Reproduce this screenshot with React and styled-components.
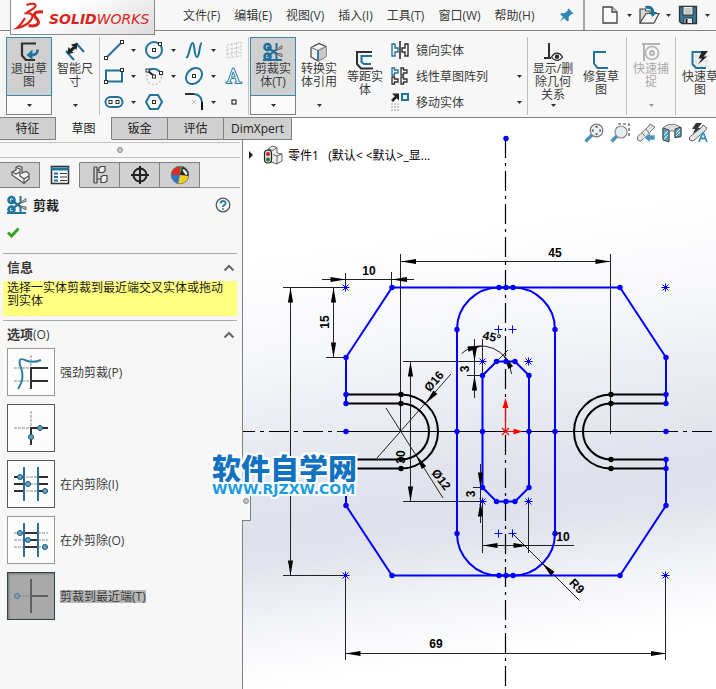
import { Fragment, useState } from "react";
import styled, { createGlobalStyle, css } from "styled-components";

const BLUE = "#1f7299";
const INK = "#2f2f2f";
const LINE = "#808080";

const GlobalStyle = createGlobalStyle`
  * {
    box-sizing: border-box;
  }
  body {
    margin: 0;
    overflow: hidden;
    background: #f7f7f7;
    color: #3a3a3a;
    font-family: "Open Sans", "Noto Sans CJK SC", sans-serif;
    font-size: 12px;
    line-height: 13px;
  }
  button {
    padding: 0;
    border: 0;
    background: none;
    color: inherit;
    font: inherit;
  }
  h1, h2, p, fieldset {
    margin: 0;
    padding: 0;
    border: 0;
  }
`;

const Page = styled.div`
  display: flex;
  flex-direction: column;
  min-height: 100vh;
`;

/* ---------- menu bar ---------- */

const MenuBar = styled.header`
  position: relative;
  display: flex;
  align-items: center;
  height: 31px;
  padding-left: 183px;
  border-bottom: 1px solid ${LINE};
`;

const Logo = styled.div`
  position: absolute;
  z-index: 2;
  top: 0;
  left: 10px;
  display: flex;
  align-items: center;
  width: 145px;
  height: 35px;
  padding-left: 4px;
  border: 1px solid #8c8c8c;
  border-top: 0;
  background: linear-gradient(150deg, #ffffff 35%, #dcdcdc);
  color: #d9251c;
  font-family: "DejaVu Sans", sans-serif;
  font-size: 14px;
  font-style: italic;
  white-space: nowrap;
`;

const LogoWord = styled.span`
  padding: 5px 0 0 4px;
`;

const Menus = styled.nav`
  display: flex;
  flex: none;
  gap: 14px;
  width: 374px;
  white-space: nowrap;
`;

const QuickTools = styled.div`
  display: flex;
  flex: none;
  align-items: center;
  align-self: stretch;
  margin-left: 6px;
  padding-left: 15px;
  border-left: 2px solid #a5a5a5;
`;

const IconButton = styled.button`
  display: flex;
  flex: none;
  align-items: center;
  justify-content: center;
  width: 20px;
  height: 20px;
`;

const DropButton = styled(IconButton)`
  width: 19px;
`;

const Svg = styled.svg`
  display: block;
  flex: none;
  overflow: visible;
`;

/* ---------- ribbon ---------- */

const RibbonBar = styled.div`
  display: flex;
  height: 87px;
  padding: 6px 0 2px 6px;
  border-bottom: 1px solid ${LINE};
  overflow: hidden;
`;

const Divider = styled.div`
  flex: none;
  width: 1px;
  margin: 0 1px;
  background: #c0c0c0;
`;

const ToolPair = styled.div`
  display: flex;
  flex: none;
  gap: 2px;
  padding: 0 1px;
`;

const Tool = styled.div`
  display: flex;
  flex: none;
  flex-direction: column;
  width: 46px;
  color: ${(p) => (p.$disabled ? "#a8a8a8" : "#3a3a3a")};
`;

const ToolFace = styled.button`
  display: flex;
  flex-direction: column;
  align-items: center;
  height: 59px;
  padding-top: ${(p) => (p.$low ? 12 : 4)}px;
  border: 1px solid transparent;
  white-space: nowrap;
  ${(p) =>
    p.$active &&
    css`
      border-color: #3f86ae;
      background: #d0d0d0;
    `}
`;

const ToolDrop = styled.button`
  display: flex;
  align-items: center;
  justify-content: center;
  height: 19px;
  border: 1px solid transparent;
  border-top: 0;
  ${(p) =>
    p.$active &&
    css`
      border-color: ${LINE};
      background: #fbfbfb;
    `}
`;

const SketchGrid = styled.div`
  display: grid;
  flex: none;
  grid-template-columns: repeat(3, 20px 20px) 20px;
  grid-auto-rows: 26px;
  align-items: center;
  padding: 0 3px;
`;

const EntityList = styled.div`
  display: grid;
  flex: none;
  grid-template-columns: 1fr 16px;
  grid-auto-rows: 26px;
  align-items: center;
  width: 138px;
  padding-left: 2px;
`;

const EntityButton = styled.button`
  display: flex;
  align-items: center;
  gap: 6px;
  white-space: nowrap;
`;

/* ---------- workspace ---------- */

const Workspace = styled.main`
  position: relative;
  display: flex;
  flex: 1;
`;

const Side = styled.aside`
  position: relative;
  z-index: 1;
  display: flex;
  flex: none;
  flex-direction: column;
  width: 243px;
`;

const RibbonTabs = styled.div`
  display: flex;
  width: max-content;
`;

const RibbonTab = styled.button`
  min-width: 56px;
  height: 22px;
  padding: 0 7px;
  border-right: 1px solid ${LINE};
  border-bottom: 1px solid ${LINE};
  background: #d0d0d0;
  color: #222;
  ${(p) =>
    p.$active &&
    css`
      height: 23px;
      margin-top: -1px;
      border-bottom-color: #f7f7f7;
      background: #f7f7f7;
    `}
`;

const Panel = styled.section`
  display: flex;
  flex: 1;
  flex-direction: column;
  padding: 2px 2px 0 0;
  border-right: 1px solid ${LINE};
  background: #f7f7f7;
`;

const Grip = styled.div`
  display: flex;
  align-items: center;
  justify-content: center;
  height: 16px;
  margin-bottom: 4px;
  border-top: 1px solid #c4c4c4;
  border-bottom: 1px solid #c4c4c4;
`;

const GripDot = styled.span`
  width: 6px;
  height: 6px;
  border: 1px solid #8d8d8d;
  border-radius: 50%;
  background: #c6c6c6;
`;

const PanelTabs = styled.div`
  display: flex;
  height: 26px;
  border-bottom: 1px solid #a8a8a8;
`;

const PanelTab = styled.button`
  display: flex;
  align-items: center;
  justify-content: center;
  width: 40px;
  height: 26px;
  border: 1px solid ${LINE};
  border-left: 0;
  background: ${(p) => (p.$active ? "#f7f7f7" : "#d0d0d0")};
  ${(p) =>
    p.$active &&
    css`
      border-top-color: #f7f7f7;
      border-bottom-color: #f7f7f7;
    `}
`;

const TitleRow = styled.div`
  display: flex;
  align-items: center;
  gap: 6px;
  height: 34px;
  padding: 0 7px;
`;

const PanelTitle = styled.h1`
  flex: 1;
  color: #222;
  font-size: 13px;
  line-height: 16px;
`;

const ConfirmRow = styled.div`
  height: 31px;
  padding: 0 3px;
`;

const Section = styled.section`
  margin: 0 3px;
  border-top: 1px solid #a8a8a8;
`;

const SectionHead = styled.h2`
  display: flex;
  align-items: center;
  justify-content: space-between;
  height: 27px;
  padding: 0 2px 0 4px;
  font-size: 13px;
  font-weight: bold;

  small {
    font-size: 12px;
    font-weight: normal;
  }
`;

const SectionLabel = styled.span`
  flex: 1;
`;

const Message = styled.p`
  height: 35px;
  margin-bottom: 4px;
  padding-left: 4px;
  background: #ffff80;
  color: #1c1c1c;
`;

const Options = styled.fieldset`
  display: flex;
  flex-direction: column;
  gap: 8px;
  padding-left: 4px;
`;

const Option = styled.label`
  display: grid;
  grid-template-columns: 48px max-content;
  gap: 5px;
  align-items: center;

  svg {
    grid-area: 1 / 1;
    justify-self: center;
    opacity: ${(p) => (p.$active ? 0.6 : 1)};
    pointer-events: none;
  }
`;

const OptionBox = styled.input`
  grid-area: 1 / 1;
  width: 48px;
  height: 48px;
  margin: 0;
  border: 1px solid ${(p) => (p.$strong ? "#5a5a5a" : "#999")};
  background: #fcfcfc;
  appearance: none;

  &:checked {
    border: 1px solid #34424c;
    background: #a9a9a9;
    box-shadow: inset 1px 1px 2px #777;
  }
`;

const OptionText = styled.span`
  background: ${(p) => (p.$active ? "#b9b9b9" : "transparent")};
`;

const Splitter = styled.div`
  position: absolute;
  top: 363px;
  left: 242px;
  display: flex;
  align-items: center;
  justify-content: center;
  width: 9px;
  height: 40px;
  border: 1px solid ${LINE};
  border-left: 0;
  background: #f7f7f7;
`;

const Canvas = styled.section`
  position: relative;
  flex: 1;
  min-width: 0;
  overflow: hidden;
  background: linear-gradient(
    172deg,
    #ffffff 22%,
    #f6f7fa 38%,
    #e8eaf1 52%,
    #dfe1eb 64%,
    #e1e3ec 70%,
    #f3f4f8 80%,
    #ffffff 90%
  );
`;

const TreeLabel = styled.div`
  position: absolute;
  top: 27px;
  left: 4px;
  display: flex;
  align-items: center;
  gap: 5px;
  height: 20px;
  color: #000;
  white-space: pre;
`;

const TreeArrow = styled(Svg)`
  margin-right: 5px;
`;

const ViewTools = styled.div`
  position: absolute;
  top: 5px;
  right: 8px;
  display: flex;
  gap: 6px;
`;

const Watermark = styled.div`
  position: absolute;
  z-index: 2;
  top: 333px;
  left: 212px;
  color: #1272c0;
  font-family: "Noto Sans CJK SC", sans-serif;
  font-size: 29px;
  font-weight: 900;
  line-height: 32px;
  white-space: nowrap;
  text-shadow:
    -2px 0 #fff,
    2px 0 #fff,
    0 -2px #fff,
    0 2px #fff,
    2px 2px #fff,
    -2px -2px #fff,
    2px -2px #fff,
    -2px 2px #fff;

  small {
    display: block;
    color: #1b9be0;
    font-family: "DejaVu Sans", sans-serif;
    font-size: 14px;
    font-weight: bold;
    line-height: 12px;
  }
`;

const DimText = styled.text`
  fill: #000;
  font-family: "Liberation Sans Narrow", "Liberation Sans", sans-serif;
  font-size: 12px;
  font-weight: bold;
  text-anchor: middle;
`;

/* ---------- icons ---------- */

const Icon = ({ children, size = 20, ...rest }) => (
  <Svg
    width={size}
    height={size}
    viewBox="0 0 20 20"
    fill="none"
    stroke={BLUE}
    strokeWidth="1.6"
    aria-hidden="true"
    {...rest}
  >
    {children}
  </Svg>
);

const Node = ({ x, y }) => (
  <rect x={x - 1.5} y={y - 1.5} width="3" height="3" fill="#fff" stroke={INK} strokeWidth="1" />
);

const Caret = ({ color = INK }) => (
  <Svg width="5" height="3" viewBox="0 0 5 3" aria-hidden="true">
    <path d="M0 0h5L2.5 3z" fill={color} />
  </Svg>
);

const Chevron = () => (
  <Svg width="12" height="8" viewBox="0 0 12 8" aria-hidden="true">
    <path d="M1.5 6.5 6 2l4.5 4.5" fill="none" stroke="#666" strokeWidth="2" />
  </Svg>
);

const LogoMark = () => (
  <Svg width="30" height="30" viewBox="0 0 30 30" fill="none" stroke="#d9251c" aria-hidden="true">
    <path d="M11.5 3C17 1 21 1.500 20.500 4c-.5 2-4 4-8.500 6.500" strokeWidth="2.200" />
    <path d="M9.500 11.500c8-1.500 9.500 2 6.500 6.500-3 4-8 7-14 8 2.500-2 5.500-5.500 8-10" strokeWidth="2.200" />
    <path d="M28 10c-6-.8-9 .6-8.500 3.500s4.500 4 4 7-4.500 4-10 3" strokeWidth="3" />
  </Svg>
);

const ExitSketch = () => (
  <Icon>
    <path d="M17 1.500H3v12L7 18h9" stroke={INK} strokeWidth="2.200" />
    <path d="M18.500 7.500c.5 4-2 5.500-6 5.500" strokeWidth="2.800" />
    <path d="M13.500 7.500v10.500L7.500 13z" fill={BLUE} stroke="none" />
  </Icon>
);

const SmartDim = () => (
  <Icon>
    <path d="M1 9l8 9M11 1l8 9" strokeWidth="2" />
    <path d="M4 10l7-6" stroke="#222" strokeWidth="3" />
    <path d="M2 12l1.500-7L8.500 11zM12.500 1 11.500 8 6 2.500z" fill="#222" stroke="none" />
  </Icon>
);

const Scissors = () => (
  <Icon>
    <circle cx="4.500" cy="5" r="3" strokeWidth="2.600" />
    <circle cx="4.500" cy="14.500" r="3" strokeWidth="2.600" />
    <path d="M4 5l10 7M4 15l10-8" strokeWidth="2.200" />
    <path d="M12 8.500l7-5v3zM12 11l7 4v-3z" fill="#bbb" stroke="#555" strokeWidth=".8" />
    <path d="M13.500 1v5.500M13.500 12v7M0 18h19" strokeWidth="2" />
  </Icon>
);

const Cube = () => (
  <Icon>
    <path d="M2 5.500 10 1.500l7 3v10l-8 4.500-7-4z" fill="#f2f2f2" stroke="#444" strokeWidth="1.200" />
    <path d="M9 8.500l8-4v10L9 19z" fill="#c8c8c8" stroke="none" />
    <path d="M2 5.500l7 3 8-4" stroke="#666" strokeWidth="1" />
    <path d="M9 8.500V18" strokeWidth="1.800" />
  </Icon>
);

const Offset = () => (
  <Icon>
    <path d="M17 2H2v12l4 4.500h12" stroke={INK} strokeWidth="2" />
    <path d="M17 6H6.500v6L9 14h7" strokeWidth="2" />
  </Icon>
);

const Mirror = () => (
  <Icon>
    <path d="M10 1v18" stroke={INK} />
    <path d="M2 4h3v4h3v4H5v4H2z" strokeWidth="1.400" />
    <path d="M18 4h-3v4h-3v4h3v4h3z" stroke={INK} strokeWidth="1.400" />
  </Icon>
);

const Pattern = () => (
  <Icon stroke={INK} strokeWidth="1.300">
    <path d="M2 2h2.500v2H8v3H4.500v2H2z" stroke={BLUE} />
    <path d="M11 2h2.500v2H17v3h-3.500v2H11zM2 11h2.500v2H8v3H4.500v2H2zM11 11h2.500v2H17v3h-3.500v2H11z" />
  </Icon>
);

const Move = () => (
  <Icon>
    <path d="M2 9l5-5" stroke="#222" strokeWidth="2.600" />
    <path d="M2 1.500h7v7z" fill="#222" stroke="none" />
    <rect x="12" y="2" width="6" height="6" strokeWidth="2" />
    <path d="M1 12h8M1 15h8M1 18h8" stroke="#ccc" strokeWidth="1.800" strokeDasharray="2 1" />
  </Icon>
);

const Relations = () => (
  <Icon>
    <path d="M6 1v15M1 16h7" stroke={INK} strokeWidth="2" />
    <path d="M8.500 15c3-5 8-5 11 0-3 4.500-8 4.500-11 0z" fill="#fff" stroke={INK} strokeWidth="1.300" />
    <circle cx="14" cy="14.800" r="2.300" fill={INK} stroke="none" />
  </Icon>
);

const Repair = () => (
  <Icon>
    <path d="M15 2H3v11.500L6.500 18H17" strokeWidth="2" />
  </Icon>
);

const Snap = () => (
  <Icon stroke="#b4b4b4">
    <path d="M1 2h18M3 2v17" strokeWidth="2" />
    <circle cx="11" cy="11" r="6.500" />
    <circle cx="11" cy="11" r="2" strokeWidth="2" />
  </Icon>
);

const RapidSketch = () => (
  <Icon>
    <path d="M6 2v16M11 2v16M16 2v16M2 6h17M2 11h17M2 16h17" stroke="#ddd" strokeWidth="1" />
    <path d="M14 2H2.500v12L6 18h10" strokeWidth="2" />
    <path d="M18 1h-6L8.500 8.500H12L7.500 15 17 6.500h-3.500z" fill="#222" stroke="none" />
  </Icon>
);

const Pin = () => (
  <Icon size={16}>
    <path
      d="M12 2l6 6-1.500 1-1-.3-3.500 3.800.3 4-1.800 1.500-4-4L1 18.500l4-6-3.500-3.500L3 7.500l4 .3L11 4.500 10.800 3z"
      fill="#2e86b3"
      stroke="none"
    />
  </Icon>
);

const NewDoc = () => (
  <Icon stroke="#444" strokeWidth="1.300">
    <path d="M3 2h9l5 5v11H3z" fill="#fbfbfb" />
    <path d="M12 2v5h5" fill="#ddd" />
  </Icon>
);

const OpenDoc = () => (
  <Icon stroke="#444" strokeWidth="1.200">
    <path d="M1 18V4h5l1 2h7v12z" fill="#d8d8d8" />
    <path d="M1 18l6-9.500h13L15 18z" fill="#f6f6f6" />
    <path d="M6.500 2.500c5-1 7 .5 7.500 5" stroke={BLUE} strokeWidth="3" />
    <path d="M10 7h8l-4.500 5z" fill={BLUE} stroke="none" />
  </Icon>
);

const Save = () => (
  <Icon stroke="#333" strokeWidth="1.300">
    <path d="M1.500 1.500h17v17H4l-2.500-2z" fill="#327a9c" />
    <path d="M5 1.500h10V10H5z" fill="#f3f3f3" strokeWidth="1" />
    <path d="M6.500 4h7M6.500 6h7M6.500 8h7" stroke="#888" strokeWidth=".8" />
    <path d="M6 13h8.500v5.500H6z" fill="#e8e8e8" strokeWidth="1" />
    <path d="M8.500 14v4" stroke="#222" strokeWidth="2" />
  </Icon>
);

const sketchIcons = {
  直线: (
    <Icon>
      <path d="M3 17L17 3" strokeWidth="2" />
      <Node x={2} y={18} />
      <Node x={18} y={2} />
    </Icon>
  ),
  圆: (
    <Icon>
      <circle cx="10" cy="10" r="8" strokeWidth="2" />
      <Node x={10} y={10} />
      <Node x={16} y={4} />
    </Icon>
  ),
  样条曲线: (
    <Icon>
      <path d="M2 17C5 19 6 3 8.500 3S10 17 13 17s2-14 5-14" strokeWidth="2" />
    </Icon>
  ),
  基准面: (
    <Icon stroke="#c2c2c2" strokeWidth="1" strokeDasharray="2 1.500">
      <path d="M3 5l14-3v14L3 18zM3 9.500l14-2M3 14l14-2M8 4v13M12.500 3v14" />
    </Icon>
  ),
  矩形: (
    <Icon>
      <rect x="2" y="4.500" width="16" height="11" strokeWidth="2" />
      <Node x={2} y={16} />
      <Node x={18} y={4} />
    </Icon>
  ),
  圆弧: (
    <Icon>
      <circle cx="10" cy="11" r="7.500" stroke="#c4c4c4" strokeDasharray="2 2" />
      <path d="M4 5c3-3 9-3 12 1" strokeWidth="2" />
      <path d="M4 5l6 5" stroke="#222" strokeWidth="2" />
      <Node x={3.5} y={4.5} />
      <Node x={10} y={10.5} />
      <Node x={17} y={7} />
    </Icon>
  ),
  椭圆: (
    <Icon>
      <ellipse cx="10" cy="10" rx="9" ry="7" strokeWidth="2" transform="rotate(-45 10 10)" />
      <Node x={10} y={10} />
    </Icon>
  ),
  文字: (
    <Icon stroke="#2f7fa6" strokeWidth="1">
      <path
        d="M10 2 15.500 16H18v1.500h-7V16h1.500l-1.200-3.500h-4L6 16h2v1.500H2V16h1.500L8.500 2zM9.200 6l-1.700 5h3.500z"
        fill="#dcecf4"
      />
    </Icon>
  ),
  槽口: (
    <Icon>
      <rect x="1.500" y="5" width="17" height="10" rx="5" strokeWidth="2" />
      <Node x={6.5} y={10} />
      <Node x={13.5} y={10} />
    </Icon>
  ),
  多边形: (
    <Icon>
      <path d="M6 3h8l4 7-4 7H6l-4-7z" strokeWidth="2" />
      <Node x={10} y={10} />
    </Icon>
  ),
  圆角: (
    <Icon>
      <path d="M1 2h9" stroke={INK} strokeWidth="2" />
      <path d="M10 2c5 .5 7.500 3 8 8" strokeWidth="2" />
      <path d="M18 10v8" stroke="#111" strokeWidth="2" />
      <path d="M8 8l4 4M12 8l-4 4" stroke="#bbb" strokeWidth="1" />
    </Icon>
  ),
  点: (
    <Icon>
      <rect x="8" y="8" width="4" height="4" fill="#fff" stroke={INK} strokeWidth="1.200" />
    </Icon>
  ),
};

const panelIcons = {
  特征树: (
    <Icon stroke="#555" strokeWidth="1.300">
      <path d="M2 7l4-2V2.500L9 1l3 1.500V8l4-1.500 3 2V14l-5 4.500L2 10z" fill="#f2f2f2" />
      <path d="M2 7l4 2 4-2V4L6 2.500M10 7v4l4 3 5-3M14 14v4" />
    </Icon>
  ),
  属性: (
    <Icon stroke="#333">
      <rect x="1.500" y="1.500" width="17" height="17" fill="#fff" />
      <path d="M1 4h18" stroke={BLUE} strokeWidth="3" />
      <path d="M4 8.500h4M4 12h4M4 15.500h4" stroke={BLUE} strokeWidth="2" />
      <path d="M10 8.500h7M10 12h7M10 15.500h7" strokeWidth="1.200" />
    </Icon>
  ),
  配置: (
    <Icon stroke="#444" strokeWidth="1.200">
      <path d="M4 2v16M7 2v16M4 2h3M4 18h3M7 5h3M7 14h4" />
      <path d="M9 3l2-1.500h4V6l-2 1.500H9zM11 12l2-1.500h4V16l-2 1.500h-4z" fill="#eee" />
    </Icon>
  ),
  尺寸专家: (
    <Icon stroke="#222" strokeWidth="2">
      <circle cx="10" cy="10" r="6.500" />
      <path d="M10 1v18M1 10h18" />
    </Icon>
  ),
  外观: (
    <Icon stroke="none">
      <circle cx="10" cy="10" r="9" fill="#2b74c8" />
      <path d="M10 10H1a9 9 0 0 1 9-9z" fill="#d92c22" />
      <path d="M10 10V1a9 9 0 0 1 2.500.3z" fill="#3da546" />
      <path d="M10 10l2.500-8.700A9 9 0 0 1 18.900 11z" fill="#222" />
      <path d="M10 10l8.900 1A9 9 0 0 1 8 18.800z" fill="#f3cf22" />
      <ellipse cx="15" cy="7" rx="1.300" ry="3.500" fill="#eee" transform="rotate(-35 15 7)" />
      <circle cx="10" cy="10" r="8.800" fill="none" stroke="#777" strokeWidth=".8" />
    </Icon>
  ),
};

const viewIcons = {
  整屏显示全图: (
    <Icon stroke="#777">
      <path d="M1.500 18.500 8 12" stroke="#4b93b8" strokeWidth="3.400" />
      <circle cx="12.500" cy="7.500" r="6.300" fill="#eef2f4" strokeWidth="1.200" />
      <path
        d="M12.500 2.500l1.800 2h-3.600zM12.500 12.500l1.800-2h-3.600zM7.500 7.500l2-1.800v3.600zM17.500 7.500l-2-1.800v3.600z"
        fill="#444"
        stroke="none"
      />
    </Icon>
  ),
  局部放大: (
    <Icon stroke="#888">
      <path d="M8 1h11v12" stroke="#444" strokeWidth="1.200" strokeDasharray="3 2" />
      <path d="M1.500 18.500 7 13" stroke="#4b93b8" strokeWidth="3.400" />
      <circle cx="11" cy="9" r="6" fill="#e6edf1" strokeWidth="1.200" />
    </Icon>
  ),
  上一视图: (
    <Icon stroke="#777" strokeWidth="1">
      <path d="M1.500 13.500 12 4l2-3 5 3-3 3L5 18l-3.500-1z" fill="#e4e4e4" />
      <path d="M10 6l3 4M6 9.500l3 4" />
      <path d="M8 14.500l6-5V12h5v5h-5v2.500z" fill="#4b93b8" stroke="#fff" strokeWidth=".6" />
    </Icon>
  ),
  剖面视图: (
    <Icon stroke="#777" strokeWidth="1">
      <path d="M1 5c5-5 13-5 18 0v9h-6V9c-2-1.500-4-1.500-6 0v9l-6-2z" fill="#dcdcdc" />
      <path d="M1 5l6 2v12l-6-2zM19 4l-6 2v9l6-2z" fill="#5ba3c4" stroke="#444" />
      <path d="M2 12l4-4M2 16l4-4M14 10l4-4M14 13l4-4" stroke="#e8f3f8" />
    </Icon>
  ),
  动态注解: (
    <Icon stroke="#666" strokeWidth="1">
      <path d="M8 0h6l-4 5h3L5 11l2-5H4z" fill="#333" stroke="none" />
      <path d="M1.500 14 13 5l2-3 4 3-2 3L5 18l-3.500-1z" fill="#e4e4e4" />
      <path d="M15 9l4 10M15 9l-4 10M12.500 15.500h5" stroke="#3f8fb8" strokeWidth="1.800" />
    </Icon>
  ),
};

const PartIcon = () => (
  <Icon stroke="#666" strokeWidth="1">
    <path d="M5 4l4-3 5 1.500V8l5 1v7l-5 3-6-2z" fill="#ededed" />
    <path d="M5 4l5 1.500 4-3M10 9.500l4 1.500 5-2M14 11v8" />
    <rect x="1.500" y="5" width="7" height="13" rx="3.500" fill="#ddd" stroke="#222" strokeWidth="1.200" />
    <circle cx="5" cy="9" r="2" fill="#d21d1d" stroke="none" />
    <circle cx="5" cy="14.500" r="2" fill="#1c7d2a" stroke="none" />
  </Icon>
);

const HelpIcon = () => (
  <Icon size={16} stroke="#555">
    <circle cx="10" cy="10" r="8.500" fill="#fbfbfb" />
    <path
      d="M7 8c0-4 6.300-4 6.300-.3C13.300 10 10 9.800 10 12.500M10 14v2"
      stroke="#2a7fab"
      strokeWidth="2.400"
    />
  </Icon>
);

const CheckIcon = () => (
  <Icon>
    <path d="M5 10.500l3.500 3.500 7-7.500" stroke="#3aa327" strokeWidth="3" />
  </Icon>
);

const Ball = ({ x, y }) => (
  <circle cx={x} cy={y} r="2.500" fill="#5ba7c9" stroke="#1f5672" strokeWidth="1" />
);

const TrimArt = ({ kind }) => (
  <Svg width="36" height="36" viewBox="0 0 36 36" fill="none" stroke={INK} strokeWidth="2" aria-hidden="true">
    {kind === "power" && (
      <>
        <path d="M1 14h16M1 27h16M18 1v12" stroke="#c4c4c4" strokeDasharray="3 1" />
        <path d="M18 35V14h17M18 27h17" />
        <path d="M5 35c5-8 6-14 2-24C5 3 10 5 13 6.500c5 2 9 2 15-.5" stroke="#2d7ca3" />
      </>
    )}
    {kind === "corner" && (
      <>
        <path d="M1 18h16M18 1v16" stroke="#c4c4c4" strokeDasharray="3 1" />
        <path d="M18 35V18h17" />
        <Ball x={27} y={18} />
        <Ball x={18} y={27} />
      </>
    )}
    {(kind === "inside" || kind === "outside") && (
      <>
        <path d="M1 11h34M1 18h34M1 25h34" stroke="#c4c4c4" strokeDasharray="3 1" />
        <path
          d={
            kind === "inside"
              ? "M1 11h10M1 18h10M1 25h10M25 11h10M25 18h10M25 25h10"
              : "M11 11h14M11 18h14M11 25h14"
          }
        />
        <path d="M11 1v34M25 1v34" stroke="#2d6f94" />
        <Ball x={7} y={11} />
        <Ball x={15} y={18} />
        <Ball x={32} y={25} />
      </>
    )}
    {kind === "closest" && (
      <>
        <path d="M5 18h13" stroke="#888" strokeDasharray="3 1" />
        <path d="M18 1v34M18 18h17" />
        <Ball x={4} y={18} />
      </>
    )}
  </Svg>
);

/* ---------- sketch ---------- */

const points = [
  [392, 287.5], [499, 287.5], [506, 287.5], [513, 287.5], [620, 287.5],
  [346, 357.5], [666, 357.5], [346, 394.5], [666, 394.5], [346, 403.5],
  [666, 403.5], [346, 431.5], [457, 431.5], [482.5, 431.5], [529, 431.5],
  [555, 431.5], [666, 431.5], [666, 459.5], [666, 468.5], [346, 505.5],
  [666, 505.5], [392, 575.5], [499, 575.5], [506, 575.5], [513, 575.5],
  [620, 575.5], [457, 329.5], [555, 329.5], [457, 533.5], [555, 533.5],
  [482.5, 375.5], [496.5, 361.5], [506, 361.5], [515, 361.5], [529, 375.5],
  [529, 487.5], [515, 501.5], [506, 501.5], [496.5, 501.5], [482.5, 487.5],
  [506, 138.5],
];

const slotPoints = [394.5, 403.5, 459.5, 468.5].flatMap((y) => [[401, y], [611, y]]);

const stars = [
  [345.5, 287.5], [665.5, 287.5], [482.5, 361.5], [528.5, 361.5],
  [482.5, 501.5], [528.5, 501.5], [345.5, 575.5], [665.5, 575.5],
];

const crosses = [[498.5, 329.5], [512.5, 329.5], [498.5, 533.5], [512.5, 533.5]];

// tip x, tip y, direction in degrees
const arrows = [
  [401, 261.5, 180], [610.5, 261.5, 0],
  [345.5, 279.5, 0], [392, 279.5, 180],
  [333.5, 287.5, -90], [333.5, 357.5, 90],
  [290.5, 287.5, -90], [290.5, 575.5, 90],
  [345.5, 653.5, 180], [666, 653.5, 0],
  [410.5, 361.5, -90], [410.5, 501.5, 90],
  [474.5, 361.5, 90], [474.5, 375.5, -90],
  [480.5, 487.5, 90], [480.5, 501.5, -90],
  [482.5, 545.5, 180], [528.5, 545.5, 0],
  [425.5, 403.5, 131], [416, 455, 238],
  [542, 563, 225], [482.5, 345.5, -14], [503.5, 354.5, -119],
];

const dims = [
  ["45", 555, 257, 0],
  ["10", 369, 275, 0],
  ["15", 329, 322, -90],
  ["30", 405, 457, -90],
  ["69", 436, 648, 0],
  ["3", 469, 369, -90],
  ["3", 475, 494, -90],
  ["10", 563, 541, 0],
  ["R9", 574, 589, 45],
  ["45°", 491, 341, 12],
  ["Ø16", 437, 384, -48],
  ["Ø12", 438, 482, 52],
];

const Sketch = () => (
  <Svg width="473" height="571" viewBox="243 118 473 571" fill="none" role="img" aria-label="草图">
    <g stroke="#000" strokeWidth="1.200">
      <path d="M505.500 138v551" strokeDasharray="20 5 3 5" />
      <path d="M243 431.500h103M666 431.500h50" strokeDasharray="20 5 4 5" strokeDashoffset="8" />
      <path d="M346 431.500h320" />
    </g>
    <g stroke="#222" strokeWidth="1">
      <path d="M400.500 254v178M610.500 254v180M401 261.500h209" />
      <path d="M322 279.500h92M345.500 273v14M391.500 272v15" />
      <path d="M283 287.500h62M326 357.500h19M333.500 288v69" />
      <path d="M290.500 288v288M283 575.500h62" />
      <path d="M345.500 578v82M665.500 578v82M346 653.500h320" />
      <path d="M403 361.500h79M403 501.500h79M410.500 362v139" />
      <path d="M377 458l74-84M386 408l57 90" />
      <path d="M474.500 339v59M467 375.500h15M482.500 339v36" />
      <path d="M480.500 464v59M473 487.500h9" />
      <path d="M482.500 504v49M528.500 504v49M483 545.500h91" />
      <path d="M512.500 533.500l67 67M496 362l12-12" />
      <path d="M461.700 353.500A30 30 0 0 1 511.500 374" />
    </g>
    <g stroke="#000" strokeWidth="2">
      <path d="M346 394.500h55a37 37 0 0 1 0 74h-55M346 403.500h55a28 28 0 0 1 0 56h-55" />
      <path d="M666 394.500h-55a37 37 0 0 0 0 74h55M666 403.500h-55a28 28 0 0 0 0 56h55" />
    </g>
    <g stroke="#0000ff" strokeWidth="2">
      <path d="M346 403.500v-46l46-70h228l46 70v46M666 459.500v46l-46 70H392l-46-70v-46" />
      <path d="M457 329.500a42 42 0 0 1 42-42h14a42 42 0 0 1 42 42v204a42 42 0 0 1-42 42h-14a42 42 0 0 1-42-42z" />
      <path d="M482.500 375.500l14-14H515l14 14v112l-14 14h-18.500l-14-14z" />
    </g>
    <g stroke="#0000ff" strokeWidth="1">
      {stars.map(([x, y]) => (
        <path
          key={`${x}-${y}`}
          d={`M${x - 4} ${y}h8M${x} ${y - 4}v8M${x - 3} ${y - 3}l6 6M${x + 3} ${y - 3}l-6 6`}
        />
      ))}
      {crosses.map(([x, y]) => (
        <path key={`${x}-${y}`} d={`M${x - 4} ${y}h8M${x} ${y - 4}v8`} />
      ))}
    </g>
    <g fill="#000">
      {arrows.map(([x, y, angle]) => (
        <path
          key={`${x}-${y}`}
          d="M0 0-15-2.600v5.200z"
          transform={`translate(${x} ${y}) rotate(${angle})`}
        />
      ))}
      {slotPoints.map(([x, y]) => (
        <circle key={`${x}-${y}`} cx={x} cy={y} r="2.700" />
      ))}
    </g>
    <g fill="#0000ff">
      {points.map(([x, y]) => (
        <circle key={`${x}-${y}`} cx={x} cy={y} r="2.700" />
      ))}
    </g>
    <g stroke="#f00" strokeWidth="1.200">
      <path d="M505.500 431.500V404M505.500 431.500H516M502 428l7 7M509 428l-7 7" />
      <path d="M505.500 398l3 10h-6zM522.500 431.500l-9-3v6z" fill="#f00" stroke="none" />
    </g>
    {dims.map(([label, x, y, angle]) => (
      <DimText key={`${label}-${y}`} transform={`translate(${x} ${y}) rotate(${angle})`}>
        {label}
      </DimText>
    ))}
  </Svg>
);

/* ---------- app ---------- */

const menus = ["文件(F)", "编辑(E)", "视图(V)", "插入(I)", "工具(T)", "窗口(W)", "帮助(H)"];
const ribbonTabs = ["特征", "草图", "钣金", "评估", "DimXpert"];
const lastColumn = ["基准面", "文字", "点"];

const quickTools = [
  ["新建", <NewDoc />],
  ["打开", <OpenDoc />],
  ["保存", <Save />],
];

const trimOptions = [
  { kind: "power", label: "强劲剪裁(P)" },
  { kind: "corner", label: "" },
  { kind: "inside", label: "在内剪除(I)" },
  { kind: "outside", label: "在外剪除(O)" },
  { kind: "closest", label: "剪裁到最近端(T)" },
];

const More = ({ name }) => (
  <DropButton type="button" aria-label={`${name} 更多`}>
    <Caret />
  </DropButton>
);

const BigTool = ({ icon, lines, active, low, disabled, drop = true }) => (
  <Tool $disabled={disabled}>
    <ToolFace type="button" $active={active} $low={low} disabled={disabled}>
      {icon}
      {lines.map((line) => (
        <span key={line}>{line}</span>
      ))}
    </ToolFace>
    {drop && (
      <ToolDrop type="button" $active={active} aria-label={`${lines.join("")} 更多`}>
        <Caret color={disabled ? "#999" : INK} />
      </ToolDrop>
    )}
  </Tool>
);

const App = () => {
  const [tab, setTab] = useState("草图");
  const [panelTab, setPanelTab] = useState("属性");
  const [trim, setTrim] = useState("closest");

  return (
    <Page>
      <GlobalStyle />
      <MenuBar>
        <Logo>
          <LogoMark />
          <LogoWord>
            <b>SOLID</b>WORKS
          </LogoWord>
        </Logo>
        <Menus>
          {menus.map((menu) => (
            <button type="button" key={menu}>
              {menu}
            </button>
          ))}
        </Menus>
        <IconButton type="button" aria-label="固定菜单">
          <Pin />
        </IconButton>
        <QuickTools>
          {quickTools.map(([name, icon]) => (
            <Fragment key={name}>
              <IconButton type="button" aria-label={name}>
                {icon}
              </IconButton>
              <More name={name} />
            </Fragment>
          ))}
        </QuickTools>
      </MenuBar>

      <RibbonBar>
        <BigTool icon={<ExitSketch />} lines={["退出草", "图"]} active />
        <BigTool icon={<SmartDim />} lines={["智能尺", "寸"]} />
        <Divider />
        <SketchGrid>
          {Object.entries(sketchIcons).map(([name, icon]) => (
            <Fragment key={name}>
              <IconButton type="button" aria-label={name}>
                {icon}
              </IconButton>
              {name === "多边形" ? <span /> : !lastColumn.includes(name) && <More name={name} />}
            </Fragment>
          ))}
        </SketchGrid>
        <Divider />
        <BigTool icon={<Scissors />} lines={["剪裁实", "体(T)"]} active />
        <BigTool icon={<Cube />} lines={["转换实", "体引用"]} />
        <BigTool icon={<Offset />} lines={["等距实", "体"]} low drop={false} />
        <EntityList>
          <EntityButton type="button">
            <Mirror />
            镜向实体
          </EntityButton>
          <span />
          <EntityButton type="button">
            <Pattern />
            线性草图阵列
          </EntityButton>
          <More name="线性草图阵列" />
          <EntityButton type="button">
            <Move />
            移动实体
          </EntityButton>
          <More name="移动实体" />
        </EntityList>
        <Divider />
        <ToolPair>
          <BigTool icon={<Relations />} lines={["显示/删", "除几何", "关系"]} />
          <BigTool icon={<Repair />} lines={["修复草", "图"]} low drop={false} />
        </ToolPair>
        <Divider />
        <BigTool icon={<Snap />} lines={["快速捕", "捉"]} disabled />
        <Divider />
        <BigTool icon={<RapidSketch />} lines={["快速草", "图"]} low drop={false} />
      </RibbonBar>

      <Workspace>
        <Side>
          <RibbonTabs>
            {ribbonTabs.map((name) => (
              <RibbonTab
                type="button"
                key={name}
                $active={tab === name}
                onClick={() => setTab(name)}
              >
                {name}
              </RibbonTab>
            ))}
          </RibbonTabs>
          <Panel>
            <Grip>
              <GripDot />
            </Grip>
            <PanelTabs>
              {Object.entries(panelIcons).map(([name, icon]) => (
                <PanelTab
                  type="button"
                  key={name}
                  aria-label={name}
                  $active={panelTab === name}
                  onClick={() => setPanelTab(name)}
                >
                  {icon}
                </PanelTab>
              ))}
            </PanelTabs>
            <TitleRow>
              <Scissors />
              <PanelTitle>剪裁</PanelTitle>
              <IconButton type="button" aria-label="帮助">
                <HelpIcon />
              </IconButton>
            </TitleRow>
            <ConfirmRow>
              <IconButton type="button" aria-label="确定">
                <CheckIcon />
              </IconButton>
            </ConfirmRow>
            <Section>
              <SectionHead>
                <SectionLabel>信息</SectionLabel>
                <Chevron />
              </SectionHead>
              <Message>
                选择一实体剪裁到最近端交叉实体或拖动
                <br />
                到实体
              </Message>
            </Section>
            <Section>
              <SectionHead>
                <SectionLabel>
                  选项<small>(O)</small>
                </SectionLabel>
                <Chevron />
              </SectionHead>
              <Options>
                {trimOptions.map(({ kind, label }) => (
                  <Option key={kind} $active={trim === kind}>
                    <OptionBox
                      type="radio"
                      name="trim"
                      aria-label={label || "边角"}
                      $strong={kind === "corner" || kind === "inside"}
                      checked={trim === kind}
                      onChange={() => setTrim(kind)}
                    />
                    <TrimArt kind={kind} />
                    <OptionText $active={trim === kind}>{label}</OptionText>
                  </Option>
                ))}
              </Options>
            </Section>
          </Panel>
          <Splitter>
            <GripDot />
          </Splitter>
        </Side>

        <Canvas>
          <Sketch />
          <TreeLabel>
            <TreeArrow width="6" height="10" viewBox="0 0 6 10" aria-hidden="true">
              <path d="M2 1l4 4-4 4z" fill="#222" />
            </TreeArrow>
            <PartIcon />
            <span>零件1{"  "} (默认&lt; &lt;默认&gt;_显...</span>
          </TreeLabel>
          <ViewTools>
            {Object.entries(viewIcons).map(([name, icon]) => (
              <IconButton type="button" key={name} aria-label={name}>
                {icon}
              </IconButton>
            ))}
          </ViewTools>
        </Canvas>
        <Watermark>
          软件自学网
          <small>WWW.RJZXW.COM</small>
        </Watermark>
      </Workspace>
    </Page>
  );
};

export default App;
